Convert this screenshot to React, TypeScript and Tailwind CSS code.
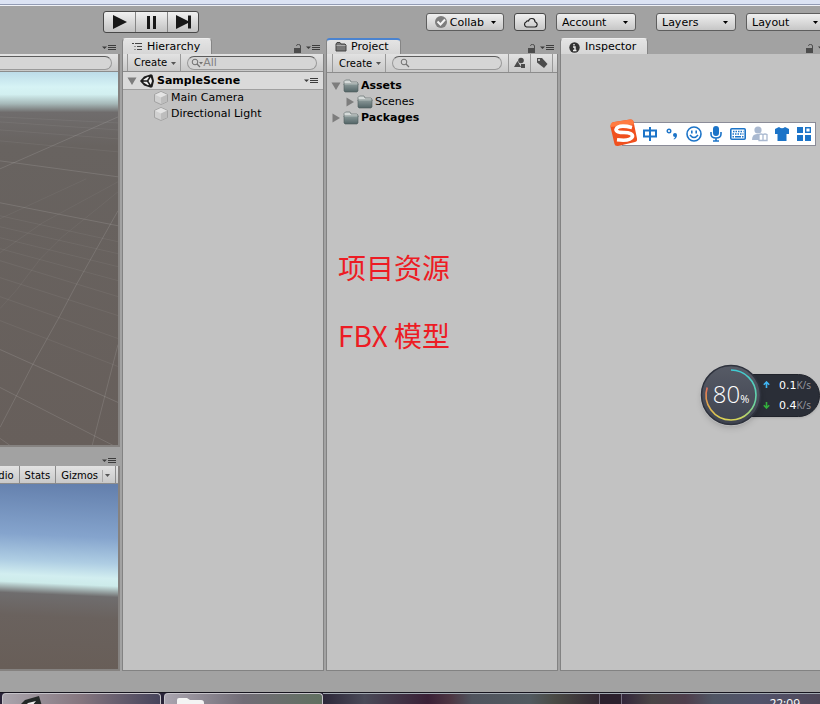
import React from "react";

const FONT = "font-['DejaVu_Sans',Verdana,sans-serif]";

function Caret({ className = "" }: { className?: string }) {
  return (
    <svg viewBox="0 0 5 3" className={`h-[3px] w-[5px] shrink-0 ${className}`} aria-hidden="true">
      <path d="M0 0h5L2.500 3z" fill="currentColor" />
    </svg>
  );
}

function PaneMenu() {
  return (
    <button aria-label="Pane menu" className="flex items-center text-[#3c3c3c]">
      <svg viewBox="0 0 14 6" className="h-1.5 w-3.5" aria-hidden="true">
        <path d="M0 1.500h5L2.500 4z" fill="currentColor" />
        <path d="M6 .5h8M6 2.500h8M6 4.500h8" stroke="currentColor" />
      </svg>
    </button>
  );
}

function Lock() {
  return (
    <button aria-label="Lock pane" className="text-[#4c4c4c]">
      <svg viewBox="0 0 8 9" className="h-[9px] w-2" aria-hidden="true">
        <path d="M0 4h7v5H0z" fill="currentColor" />
        <path d="M2.500 2V1.500Q2.500.5 4.500.5T6.500 2v2.500" fill="none" stroke="currentColor" />
      </svg>
    </button>
  );
}

function Tab({ icon, label, active = false }: { icon: React.ReactNode; label: string; active?: boolean }) {
  return (
    <button
      className={`flex h-4 items-center gap-1 rounded-t-sm border border-b-0 border-[#858585] bg-linear-to-b from-[#e4e4e4] to-[#d6d6d6] pl-2 pr-[11px] text-[11px] leading-4 ${
        active ? "border-t-2 border-t-[#4a83d0]" : "border-t-[#ededed] pt-px"
      }`}
    >
      {icon}
      {label}
    </button>
  );
}

const strip = "flex shrink-0 items-center border-b border-[#8c8c8c] bg-linear-to-b from-[#e2e2e2] to-[#c9c9c9]";

function Search({ label, value = "", filter = false }: { label: string; value?: string; filter?: boolean }) {
  return (
    <label className="mx-1.5 flex h-3.5 min-w-0 flex-1 items-center rounded-full border border-[#999] border-t-[#5c5c5c] bg-[#d5d5d5] pl-[3px] text-[#707070]">
      <svg viewBox="0 0 12 10" className={filter ? "h-2.5 w-3 shrink-0" : "ml-1 h-2.5 w-3 shrink-0"} aria-hidden="true">
        <circle cx="4" cy="4" r="2.800" fill="none" stroke="currentColor" />
        <path d="M6 6l3 3" stroke="currentColor" strokeWidth="1.300" />
        {filter && <path d="M8 4h4l-2 2.500z" fill="currentColor" />}
      </svg>
      <input aria-label={label} placeholder={value} className="h-3 w-full min-w-0 bg-transparent text-[11px] leading-3 outline-none placeholder:text-[#808080]" />
    </label>
  );
}

function CreateButton() {
  return (
    <button className="ml-1 flex h-full shrink-0 items-center gap-1 border-x border-[#999] pl-1.5 pr-1 pt-px text-[10px] leading-4">
      Create
      <Caret className="text-[#555]" />
    </button>
  );
}

function Folder() {
  return (
    <svg viewBox="0 0 16 14" className="h-3.5 w-4 shrink-0" aria-hidden="true">
      <defs>
        <linearGradient id="folder" x1="0" y1="0" x2="0" y2="1">
          <stop offset="0" stopColor="#8b9999" />
          <stop offset="1" stopColor="#526466" />
        </linearGradient>
      </defs>
      <path d="M1 4V2.500L2.500 1H7l1 2h6l1 1v2H1z" fill="#d5dad9" stroke="#6e7878" strokeWidth=".8" />
      <path d="M1 5h14v7l-1 1H2l-1-1z" fill="url(#folder)" stroke="#4d5b5d" strokeWidth=".6" />
      <path d="M1.500 5.500h13" stroke="#a3b0af" strokeWidth=".8" />
    </svg>
  );
}

function Fold({ open = false }: { open?: boolean }) {
  return (
    <svg viewBox="0 0 10 10" className="h-2.5 w-2.5 shrink-0" aria-hidden="true">
      <path d={open ? "M.5 1.500h9L5 9z" : "M1.500 .5v9L9 5z"} fill="#7d7d7d" />
    </svg>
  );
}

function CubeIcon() {
  return (
    <svg viewBox="0 0 14 14" className="h-3.5 w-3.5 shrink-0" aria-hidden="true">
      <path d="M7 .5L13.500 3.500v7L7 13.500.5 10.500v-7z" fill="#d0d0d0" stroke="#989898" strokeWidth=".8" />
      <path d="M1 3.700L7 6.500l6-2.800L7 1z" fill="#e4e4e4" />
      <path d="M7 6.500v6.500l6-2.800V3.700z" fill="#bdbdbd" />
    </svg>
  );
}

function UnityIcon() {
  return (
    <svg viewBox="0 0 14 14" className="h-3.5 w-3.5 shrink-0" aria-hidden="true">
      <path d="M0 7L4 2.500 11 .3 12.500 1 14 7l-1.500 6-1.500.7L4 11.500z" fill="#1c1c1c" />
      <path d="M3.500 5.500L8 2.800l1 .4L7 6.200H3.500zM3.500 8.500L8 11.200l1-.4L7 7.800H3.500zM8.500 7l2.300-3.800L12 7l-1.200 3.800z" fill="#eee" />
    </svg>
  );
}

function MenuSelect({ label }: { label: string }) {
  return (
    <label className="relative flex h-[18px] w-20 text-[11px]">
      <select
        aria-label={label}
        className="h-full w-full appearance-none rounded-[3px] border border-[#5e5e5e] bg-linear-to-b from-[#f0f0f0] to-[#c6c6c6] pl-[5px] pt-px leading-4"
      >
        <option>{label}</option>
      </select>
      <Caret className="pointer-events-none absolute right-2 top-2" />
    </label>
  );
}

function Toolbar() {
  const play = "flex w-8 items-center justify-center border-r border-[#858585] last:w-[30px] last:border-r-0";
  return (
    <header className="flex h-8 shrink-0 items-center justify-between overflow-hidden pl-[103px]">
      <div className="flex h-[22px] shrink-0 rounded-[3px] border border-[#484848] bg-linear-to-b from-[#f1f1f1] to-[#c2c2c2]">
        <button aria-label="Play" className={play}>
          <svg viewBox="0 0 14 14" className="h-3.5 w-3.5"><path d="M0 0l14 7-14 7z" fill="#181818" /></svg>
        </button>
        <button aria-label="Pause" className={play}>
          <svg viewBox="0 0 9 13" className="h-[13px] w-[9px]"><path d="M0 0h3v13H0zM6 0h3v13H6z" fill="#181818" /></svg>
        </button>
        <button aria-label="Step" className={play}>
          <svg viewBox="0 0 15 14" className="h-3.5 w-[15px]"><path d="M0 0l12 6V.5h3v13h-3V8L0 14z" fill="#181818" /></svg>
        </button>
      </div>
      <div className="-mr-1.5 flex shrink-0 items-center gap-2.5">
        <button className="flex h-[18px] items-center gap-[3px] rounded-[3px] border border-[#5e5e5e] bg-linear-to-b from-[#f0f0f0] to-[#c6c6c6] pl-2 pr-[7px] text-[11px]">
          <svg viewBox="0 0 12 12" className="h-3 w-3">
            <circle cx="6" cy="6" r="6" fill="#7d7d7d" />
            <path d="M2.500 5.500l3 3 4.500-5" fill="none" stroke="#f5f5f5" strokeWidth="2" />
          </svg>
          <span className="pt-0.5">Collab</span>
          <Caret className="ml-1" />
        </button>
        <button aria-label="Cloud services" className="flex h-[18px] w-8 items-center justify-center rounded-[3px] border border-[#484848] bg-linear-to-b from-[#f0f0f0] to-[#c6c6c6]">
          <svg viewBox="0 0 15 11" className="h-[11px] w-[15px]">
            <path d="M3.500 10A2.700 2.700 0 0 1 3 5Q3.500 3.500 5.500 4A3.300 3.300 0 0 1 12 4.700Q14.200 5.500 14.200 7.500T12 10z" fill="none" stroke="#222" strokeWidth="1.200" />
          </svg>
        </button>
        <MenuSelect label="Account" />
        <div className="ml-2.5 flex gap-2.5">
          <MenuSelect label="Layers" />
          <MenuSelect label="Layout" />
        </div>
      </div>
    </header>
  );
}

const gridLines = [
  "M0 45L119 51M0 50L119 58M0 58L119 67M0 69L119 80",
  "M0 144L119 170M0 155L119 182M0 166L119 195M0 177L119 209M0 189L119 225M0 206L119 244M0 225L119 267M0 249L119 295",
  "M0 181L43 151L119 110M0 237L17 218L40 188L63 165L119 120M0 147L87 107",
];
const brightLines = "M0 89L119 105M0 131L119 154M0 278L119 331M0 316L114 374M0 367L10 374M0 97L119 45M0 356L33 293L60 245L77 213L119 139M93 374L119 273";

function SceneDrawing() {
  return (
    <svg viewBox="0 0 119 374" preserveAspectRatio="none" className="h-full w-full" role="img" aria-label="Scene view">
      <defs>
        <linearGradient id="scene" x1="0" y1="0" x2="0" y2="374" gradientUnits="userSpaceOnUse">
          <stop offset="0" stopColor="#bddce9" />
          <stop offset=".04" stopColor="#d6f3f5" />
          <stop offset=".06" stopColor="#d2eff0" />
          <stop offset=".085" stopColor="#a6b8b8" />
          <stop offset=".108" stopColor="#6f6c6c" />
          <stop offset=".2" stopColor="#686360" />
          <stop offset="1" stopColor="#675f5b" />
        </linearGradient>
      </defs>
      <path d="M0 0h119v374H0z" fill="url(#scene)" />
      <g fill="none" stroke="#fff">
        <path d={gridLines[0]} opacity=".06" />
        <path d={gridLines[1]} opacity=".06" />
        <path d={gridLines[2]} opacity=".05" />
        <path d={brightLines} opacity=".12" />
      </g>
    </svg>
  );
}

function GameDrawing() {
  return (
    <svg viewBox="0 0 119 186" preserveAspectRatio="none" className="h-full w-full" role="img" aria-label="Game view">
      <defs>
        <linearGradient id="game" x1="0" y1="0" x2="0" y2="186" gradientUnits="userSpaceOnUse">
          <stop offset="0" stopColor="#6480ad" />
          <stop offset=".28" stopColor="#85a4cd" />
          <stop offset=".42" stopColor="#aecde3" />
          <stop offset=".5" stopColor="#d2eef0" />
          <stop offset=".54" stopColor="#cdebea" />
          <stop offset=".6" stopColor="#6f6d6e" />
          <stop offset=".72" stopColor="#6a625e" />
          <stop offset="1" stopColor="#685e58" />
        </linearGradient>
      </defs>
      <path d="M-10 -14h140v220H-10z" fill="url(#game)" transform="rotate(2.500 60 93)" />
    </svg>
  );
}

const tabRow = "flex h-4 shrink-0 items-end justify-between";
const tabTools = "flex h-4 items-center gap-1 pt-1";
const paneBody = "flex min-h-0 flex-1 flex-col border border-t-0 border-[#828282] bg-[#c2c2c2]";

function ViewsColumn() {
  return (
    <section className="flex min-w-0 flex-col">
      <div className="flex h-4 shrink-0 items-center justify-end pr-1 pt-1"><PaneMenu /></div>
      <div className="flex min-h-0 grow-[394] basis-0 flex-col border-b-2 border-r-2 border-[#858280]">
        <div className={`${strip} h-[18px]`}>
          <input aria-label="Search scene" className="-ml-3 mr-1.5 h-3.5 min-w-0 flex-1 rounded-full border border-[#999] border-t-[#5c5c5c] bg-[#d5d5d5]" />
        </div>
        <div className="min-h-0 flex-1"><SceneDrawing /></div>
      </div>
      <div className="flex h-[19px] shrink-0 items-center justify-end pr-1 pt-2"><PaneMenu /></div>
      <div className="flex min-h-0 grow-[204] basis-0 flex-col border-b-2 border-r-2 border-[#858280]">
        <div className={`${strip} h-[18px] overflow-hidden text-[10px] leading-4`}>
          <div className="flex h-full w-full justify-end pr-0.5">
            <button className="h-full shrink-0 border-r border-[#8c8c8c] px-[5px] pt-0.5">Mute Audio</button>
            <button className="h-full shrink-0 border-r border-[#8c8c8c] px-[5px] pt-0.5">Stats</button>
            <button className="flex h-full shrink-0 items-center gap-1 border-r border-[#8c8c8c] px-[5px] pt-0.5">
              Gizmos
              <span className="flex h-3 items-center border-l border-[#aaa] pl-0.5"><Caret className="text-[#555]" /></span>
            </button>
          </div>
        </div>
        <div className="min-h-0 flex-1 overflow-hidden"><GameDrawing /></div>
      </div>
    </section>
  );
}

function HierarchyPane() {
  return (
    <section className="flex min-w-0 flex-col">
      <div className={`${tabRow} pr-1`}>
        <Tab
          label="Hierarchy"
          icon={
            <svg viewBox="0 0 12 10" className="h-2.5 w-3">
              <path d="M1 1.500h2M4 1.500h7M6 4.500h5M6 7.500h5M3.500 4.500h1M3.500 7.500h1" fill="none" stroke="#444" />
            </svg>
          }
        />
        <div className={tabTools}><Lock /><PaneMenu /></div>
      </div>
      <div className={paneBody}>
        <div className={`${strip} h-[18px]`}>
          <CreateButton />
          <Search label="Search hierarchy" value="All" filter />
        </div>
        <div className="flex h-[18px] shrink-0 items-center gap-[3px] border-b border-[#a0a0a0] bg-[#dadada] pl-1 pr-[5px] text-[11px] font-bold">
          <Fold open />
          <UnityIcon />
          <span className="flex-1 pt-px">SampleScene</span>
          <PaneMenu />
        </div>
        <ul className="text-[11px] leading-4">
          {["Main Camera", "Directional Light"].map((name) => (
            <li key={name} className="flex h-4 items-center gap-[3px] pl-[31px]"><CubeIcon />{name}</li>
          ))}
        </ul>
      </div>
    </section>
  );
}

function ProjectPane() {
  return (
    <section className="flex min-w-0 flex-col">
      <div className={`${tabRow} pr-1`}>
        <Tab
          active
          label="Project"
          icon={
            <svg viewBox="0 0 12 10" className="h-2.5 w-3">
              <path d="M1 9V2l1-1.500h3L6 2h4l1 1v6z" fill="#777" stroke="#444" />
              <path d="M1.500 3.500h9" stroke="#aaa" />
            </svg>
          }
        />
        <div className={tabTools}><Lock /><PaneMenu /></div>
      </div>
      <div className={paneBody}>
        <div className={`${strip} h-[19px] pl-px`}>
          <CreateButton />
          <Search label="Search project" />
          <button aria-label="Search by type" className="flex h-full w-[22px] shrink-0 items-center justify-center border-l border-[#999]">
            <svg viewBox="0 0 12 12" className="h-3 w-3" fill="#4c4c4c"><circle cx="7" cy="3.500" r="2.800" /><path d="M0 10l3.500-6L7 10zM7 7h4v4H7z" /></svg>
          </button>
          <button aria-label="Search by label" className="mr-1 flex h-full w-[23px] shrink-0 items-center justify-center border-x border-[#999]">
            <svg viewBox="0 0 12 12" className="h-3 w-3"><path d="M1 1h5l5.500 6L8 11 1 5.500z" fill="#4c4c4c" /><circle cx="3" cy="3" r="1" fill="#ddd" /></svg>
          </button>
        </div>
        <ul className="pl-1 pt-[5px] text-[11px] leading-4">
          <li className="flex h-4 items-center gap-0.5 font-bold"><Fold open /><Folder /><span>Assets</span></li>
          <li className="flex h-4 items-center gap-0.5 pl-3.5"><Fold /><Folder />Scenes</li>
          <li className="flex h-4 items-center gap-0.5 font-bold"><Fold /><Folder /><span>Packages</span></li>
        </ul>
        <div className="mt-[121px] flex flex-col gap-7 pl-[11px] font-['Noto_Sans_CJK_SC',sans-serif] text-[28px] leading-10 text-[#ed1c24]">
          <p>项目资源</p>
          <p>FBX 模型</p>
        </div>
      </div>
    </section>
  );
}

function InspectorPane() {
  return (
    <section className="flex min-w-0 flex-col overflow-hidden">
      <div className={tabRow}>
        <Tab
          label="Inspector"
          icon={
            <svg viewBox="0 0 11 11" className="mr-px h-[11px] w-[11px]">
              <circle cx="5.500" cy="5.500" r="5.200" fill="#333" />
              <path d="M4 5h2v3.500M4 8.500h3.500M5 2v1.500" stroke="#eee" strokeWidth="1.400" fill="none" />
            </svg>
          }
        />
        <div className={`-mr-3 ${tabTools}`}><Lock /><PaneMenu /></div>
      </div>
      <div className={`${paneBody} border-r-0`} />
    </section>
  );
}

function InputMethodBar() {
  const key = "flex h-5 w-[22px] items-center justify-center";
  return (
    <div className="absolute right-1 top-[122px] flex h-6 items-center border border-[#8b8c98] bg-white pl-4 text-[#1c74c8]">
      <svg viewBox="0 0 30 30" className="absolute -left-[14px] -top-1 h-[30px] w-[30px]" aria-hidden="true">
        <path d="M4 5Q2 3.500 5 3L21 .5q3-.5 3.500 2l3.500 17q.5 3-2 3.500L9 27q-3 .5-3.500-2L1.500 8q-.5-2.500 2.500-3z" fill="#f0501e" />
        <path d="M4 3.200L21 .5q3-.5 3.500 2l.6 3L1.500 8q-.5-4 2.500-4.800z" fill="#ff7b42" />
        <path d="M23 8.500Q9 5 7 10.500q0 3 8 3 9 .2 8.500 4-2 5-15.500 3.200" fill="none" stroke="#fff" strokeWidth="3.600" />
      </svg>
      <button aria-label="Chinese input" className={key}>
        <svg viewBox="0 0 14 14" className="h-3.5 w-3.5"><path d="M1 3.500h12v6H1zM7 0v14" fill="none" stroke="currentColor" strokeWidth="2" /></svg>
      </button>
      <button aria-label="Punctuation" className={key}>
        <svg viewBox="0 0 12 12" className="h-3 w-3"><circle cx="3" cy="3" r="1.800" fill="none" stroke="currentColor" strokeWidth="1.400" /><path d="M7 7a2 2 0 1 1 4 0q0 3-3 4.500L7.500 11Q9 10 9 9 7 9 7 7z" fill="currentColor" /></svg>
      </button>
      <button aria-label="Emoji" className={key}>
        <svg viewBox="0 0 16 16" className="h-4 w-4" fill="none" stroke="currentColor" strokeWidth="1.600"><circle cx="8" cy="8" r="7" /><path d="M5.800 4.500v3M10.200 4.500v3M4 9q4 5 8 0" /></svg>
      </button>
      <button aria-label="Voice input" className={key}>
        <svg viewBox="0 0 14 16" className="h-4 w-3.5"><rect x="4" width="6" height="10" rx="3" fill="currentColor" /><path d="M2 6v2q0 4 5 4t5-4V6M7 12v3M4 15h6" fill="none" stroke="currentColor" strokeWidth="1.600" /></svg>
      </button>
      <button aria-label="Soft keyboard" className={key}>
        <svg viewBox="0 0 16 12" className="h-3 w-4"><rect x=".8" y=".8" width="14.400" height="10.400" rx="1" fill="#fff" stroke="currentColor" strokeWidth="1.600" /><path d="M3 3.500h10.500M2.500 6h11" stroke="currentColor" strokeWidth="1.500" strokeDasharray="1.500 1" /><path d="M2.500 8.700h1.500M5 8.700h6M12 8.700h1.500" stroke="currentColor" strokeWidth="1.400" /></svg>
      </button>
      <button aria-label="Account" className={key}>
        <svg viewBox="0 0 16 16" className="h-4 w-4"><circle cx="6" cy="4" r="3.600" fill="#aab9d0" /><path d="M0 14q0-6 5-6h4v6z" fill="#aab9d0" /><path d="M7 8.500q2-1 4 0 2-1 4 0v6H7zM11 8.500v6" fill="#fff" stroke="#aab9d0" strokeWidth="1.300" /></svg>
      </button>
      <button aria-label="Skins" className={key}>
        <svg viewBox="0 0 14 14" className="h-3.5 w-3.5"><path d="M4 0q3 2.500 6 0l4 2v5h-2.500v7h-9V7H0V2z" fill="currentColor" /></svg>
      </button>
      <button aria-label="Toolbox" className={key}>
        <svg viewBox="0 0 14 14" className="h-3.5 w-3.5"><path d="M0 0h6v6H0zM0 8h6v6H0zM8 8h6v6H8z" fill="currentColor" /><path d="M8.700.7h4.600v4.600H8.700z" fill="none" stroke="currentColor" strokeWidth="1.400" /></svg>
      </button>
    </div>
  );
}

function SpeedRow({ up, rate }: { up: boolean; rate: string }) {
  return (
    <div className="flex h-[21px] items-center">
      <svg viewBox="0 0 7 7" className="mr-[9px] h-[7px] w-[7px] shrink-0" aria-hidden="true">
        <path d={up ? "M3.500 7V1M.8 3.700L3.500 1l2.700 2.700" : "M3.500 0v6M.8 3.300L3.500 6l2.700-2.700"} fill="none" stroke={up ? "#3fb5f2" : "#33b13c"} strokeWidth="1.600" />
      </svg>
      <span className="pt-0.5 text-[11px] text-white">{rate}</span>
      <span className="pt-px font-['Open_Sans',sans-serif] text-[10px] text-[#9a9ca2]">K/s</span>
    </div>
  );
}

function MemoryWidget() {
  return (
    <div className="absolute right-0 top-[364px] flex h-[62px] w-[120px] items-center">
      <div className="ml-[30px] flex h-[43px] flex-1 flex-col rounded-r-full border border-[#20232b] bg-[#2a2e37] pl-8 shadow-sm">
        <SpeedRow up rate="0.1" />
        <SpeedRow up={false} rate="0.4" />
      </div>
      <div className="absolute left-0 top-0 flex h-[62px] w-[62px] items-center justify-center rounded-full shadow-md">
        <svg viewBox="0 0 62 62" className="absolute inset-0 h-full w-full" aria-hidden="true">
          <defs>
            <linearGradient id="disc" x1="0" y1="0" x2="0" y2="1"><stop offset="0" stopColor="#575b66" /><stop offset="1" stopColor="#3e4350" /></linearGradient>
            <linearGradient id="arcA" x1="0" y1="0" x2="0" y2="1"><stop offset="0" stopColor="#3fcbd4" /><stop offset=".7" stopColor="#6fd59c" /><stop offset="1" stopColor="#d9d457" /></linearGradient>
            <linearGradient id="arcB" x1="0" y1="0" x2="0" y2="1"><stop offset="0" stopColor="#e76e58" /><stop offset=".5" stopColor="#e0a54b" /><stop offset="1" stopColor="#d9d457" /></linearGradient>
          </defs>
          <circle cx="31" cy="31" r="29.500" fill="url(#disc)" stroke="#2e323d" strokeWidth="1.500" />
          <path d="M31 6a25 25 0 0 1 0 50" fill="none" stroke="url(#arcA)" strokeWidth="1.600" />
          <path d="M31 56A25 25 0 0 1 7.200 23.500" fill="none" stroke="url(#arcB)" strokeWidth="1.600" />
        </svg>
        <span className="relative flex items-baseline pb-0.5 font-['Open_Sans',sans-serif] font-light text-white">
          <span className="text-[24px] leading-8">80</span>
          <span className="text-[11px] font-normal">%</span>
        </span>
      </div>
    </div>
  );
}

function Taskbar() {
  const task = "flex w-[159px] shrink-0 overflow-hidden rounded-t-sm border border-b-0 border-[#c5c3c9]";
  return (
    <footer className="flex h-3 shrink-0 gap-[3px] overflow-hidden border-t border-[#15131d] bg-[#292338] pl-0.5">
      <button aria-label="Unity" className={`${task} bg-linear-to-r from-[#aaa5ad] via-[#85767f] to-[#47445b] pl-4`}>
        <svg viewBox="0 0 24 12" className="h-3 w-6"><path d="M0 12l6-6L20 2l3 10z" fill="#242827" /><path d="M6 12l3-3 8-2-4 5z" fill="#eee" /></svg>
      </button>
      <button aria-label="File Explorer" className={`${task} bg-linear-to-r from-[#aaa5b0] via-[#716c76] to-[#617061] pl-3`}>
        <svg viewBox="0 0 28 12" className="h-3 w-7"><path d="M0 12V6q0-2 2-2h8l3 2h11q3 0 3 3v3z" fill="#f4f4f4" /></svg>
      </button>
      <div className="-ml-[3px] flex min-w-0 flex-1 border-t border-[#a1a8b0]">
        <div className="min-w-0 flex-[276] bg-[linear-gradient(90deg,#2d2739,#4a4a58_15%,#3a2036_38%,#4d3542_46%,#50545e_54%,#525a60_75%,#4a4a45_84%,#332832)]" />
        <div className="w-[23px] shrink-0 border-x border-[#777081] bg-[#2c202d]" />
        <div className="flex min-w-0 flex-[198] justify-end bg-[linear-gradient(90deg,#33263a,#4a4546_15%,#4f3e4c_32%,#505664_46%,#52526a_70%,#4f4859)]">
          <time className="mr-5 h-2.5 font-['Open_Sans',sans-serif] text-[12px] leading-5 text-white">22:09</time>
        </div>
      </div>
    </footer>
  );
}

export default function App() {
  return (
    <div className={`relative flex h-screen min-h-[480px] flex-col overflow-hidden bg-[#a2a2a2] text-black ${FONT}`}>
      <div className="h-1.5 shrink-0 border-b border-[#f1f3f8] bg-[#dce3f3]"><div className="h-full border-b border-[#939cb4]" /></div>
      <Toolbar />
      <main className="grid min-h-0 flex-1 grid-cols-[minmax(0,120fr)_minmax(0,202fr)_minmax(0,232fr)_minmax(0,260fr)] gap-0.5">
        <ViewsColumn />
        <HierarchyPane />
        <ProjectPane />
        <InspectorPane />
      </main>
      <div className="h-[21px] shrink-0" />
      <Taskbar />
      <InputMethodBar />
      <MemoryWidget />
    </div>
  );
}
